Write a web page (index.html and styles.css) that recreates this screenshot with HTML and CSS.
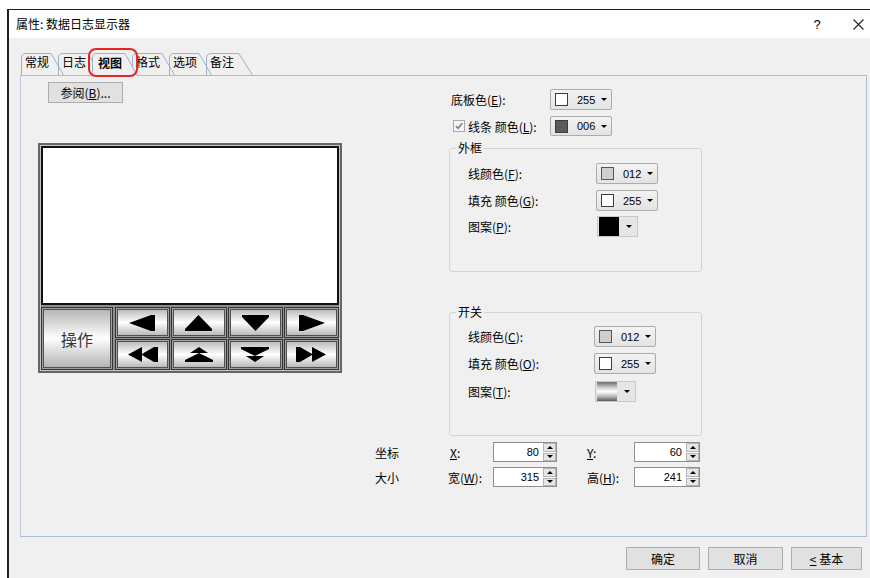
FILE: index.html
```html
<!DOCTYPE html>
<html lang="zh-CN">
<head>
<meta charset="utf-8">
<title>属性: 数据日志显示器</title>
<link rel="stylesheet" href="styles.css">
</head>
<body>
<div class="window">
  <div class="titlebar">
    <span class="title">属性: 数据日志显示器</span>
    <span class="help">?</span>
    <span class="close"><svg width="11" height="11" viewBox="0 0 11 11"><path d="M0.5 0.5 L10.5 10.5 M10.5 0.5 L0.5 10.5" stroke="#222" stroke-width="1.1" fill="none"/></svg></span>
  </div>
  <div class="body">
    <div class="tabs">
      <div class="tab"><svg class="tabshape" viewBox="0 0 43 22" preserveAspectRatio="none"><path d="M0.5 22 L0.5 5 Q0.5 0.5 5 0.5 L30 0.5 L42.5 22" /></svg><span>常规</span></div>
      <div class="tab"><svg class="tabshape" viewBox="0 0 43 22" preserveAspectRatio="none"><path d="M0.5 22 L0.5 5 Q0.5 0.5 5 0.5 L30 0.5 L42.5 22" /></svg><span>日志</span></div>
      <div class="tab active"><svg class="tabshape" viewBox="0 0 46 23" preserveAspectRatio="none"><path class="fill" d="M0.5 23 L0.5 5 Q0.5 0.5 5 0.5 L33 0.5 L45.5 23 Z" /><path d="M0.5 23 L0.5 5 Q0.5 0.5 5 0.5 L33 0.5 L45.5 23" /></svg><span>视图</span><i class="ring"></i></div>
      <div class="tab"><svg class="tabshape" viewBox="0 0 43 22" preserveAspectRatio="none"><path d="M0.5 22 L0.5 5 Q0.5 0.5 5 0.5 L30 0.5 L42.5 22" /></svg><span>格式</span></div>
      <div class="tab"><svg class="tabshape" viewBox="0 0 43 22" preserveAspectRatio="none"><path d="M0.5 22 L0.5 5 Q0.5 0.5 5 0.5 L30 0.5 L42.5 22" /></svg><span>选项</span></div>
      <div class="tab last"><svg class="tabshape" viewBox="0 0 43 22" preserveAspectRatio="none"><path d="M0.5 22 L0.5 5 Q0.5 0.5 5 0.5 L30 0.5 L42.5 22" /></svg><span>备注</span></div>
    </div>
    <div class="panel">
      <div class="left">
        <button class="browse">参阅(<u>B</u>)...</button>
        <div class="device">
          <div class="screen"></div>
          <div class="controls">
            <div class="key op">操作</div>
            <div class="keys">
              <div class="key"><svg width="27" height="16" viewBox="0 0 27 16"><polygon points="0,8 22,0 26,0 26,16 22,16"/></svg></div>
              <div class="key"><svg width="27" height="16" viewBox="0 0 27 16"><polygon points="0,14 13.5,0 27,14 27,16 0,16"/></svg></div>
              <div class="key"><svg width="27" height="16" viewBox="0 0 27 16"><polygon points="0,0 27,0 27,2 13.5,16 0,2"/></svg></div>
              <div class="key"><svg width="27" height="16" viewBox="0 0 27 16"><polygon points="27,8 5,0 1,0 1,16 5,16"/></svg></div>
              <div class="key"><svg width="30" height="15" viewBox="0 0 30 15"><polygon points="0,7.5 14,0 14,15"/><polygon points="13,7.5 26,0 30,0 30,15 26,15"/></svg></div>
              <div class="key"><svg width="28" height="15" viewBox="0 0 28 15"><polygon points="14,0 23,6 5,6"/><polygon points="14,6 28,13 28,15 0,15 0,13"/></svg></div>
              <div class="key"><svg width="28" height="15" viewBox="0 0 28 15"><polygon points="0,0 28,0 28,2 14,9 0,2"/><polygon points="5,9 23,9 14,15"/></svg></div>
              <div class="key"><svg width="30" height="15" viewBox="0 0 30 15"><polygon points="30,7.5 16,0 16,15"/><polygon points="17,7.5 4,0 0,0 0,15 4,15"/></svg></div>
            </div>
          </div>
        </div>
      </div>
      <div class="right">
        <div class="colors">
          <div class="row r1">
            <span class="lbl w99">底板色(<u>E</u>):</span>
            <div class="combo"><span class="sw white"></span><span class="num">255</span><span class="arr"></span></div>
          </div>
          <div class="row r2">
            <span class="chk"><svg width="12" height="12" viewBox="0 0 12 12"><rect x="0.5" y="0.5" width="11" height="11" fill="#f4f4f4" stroke="#a9a9a9"/><path d="M2.8 6 L5 8.3 L9.3 3.3" stroke="#6f7d99" stroke-width="1.5" fill="none"/></svg></span>
            <span class="lbl w82">线条 颜色(<u>L</u>):</span>
            <div class="combo"><span class="sw dark"></span><span class="num">006</span><span class="arr"></span></div>
          </div>
          <fieldset class="grp g1">
            <legend>外框</legend>
            <div class="grp-body">
              <div class="row">
                <span class="lbl w128">线颜色(<u>F</u>):</span>
                <div class="combo"><span class="sw grey"></span><span class="num">012</span><span class="arr"></span></div>
              </div>
              <div class="row gap6">
                <span class="lbl w128">填充 颜色(<u>G</u>):</span>
                <div class="combo"><span class="sw white"></span><span class="num">255</span><span class="arr"></span></div>
              </div>
              <div class="row gap5">
                <span class="lbl w129">图案(<u>P</u>):</span>
                <div class="pat"><span class="pat-sw black"></span><span class="arr"></span></div>
              </div>
            </div>
          </fieldset>
          <fieldset class="grp g2">
            <legend>开关</legend>
            <div class="grp-body">
              <div class="row">
                <span class="lbl w126">线颜色(<u>C</u>):</span>
                <div class="combo"><span class="sw grey"></span><span class="num">012</span><span class="arr"></span></div>
              </div>
              <div class="row gap6">
                <span class="lbl w126">填充 颜色(<u>O</u>):</span>
                <div class="combo"><span class="sw white"></span><span class="num">255</span><span class="arr"></span></div>
              </div>
              <div class="row gap7">
                <span class="lbl w127">图案(<u>T</u>):</span>
                <div class="pat"><span class="pat-sw grad"></span><span class="arr"></span></div>
              </div>
            </div>
          </fieldset>
        </div>
        <div class="geo">
          <div class="grow">
            <span class="glbl w75">坐标</span>
            <span class="glbl w43"><u>X</u>:</span>
            <div class="spin w64"><span class="val">80</span><span class="sp"><i class="up"></i><i class="dn"></i></span></div>
            <span class="glbl w47 ml30"><u>Y</u>:</span>
            <div class="spin w66"><span class="val">60</span><span class="sp"><i class="up"></i><i class="dn"></i></span></div>
          </div>
          <div class="grow g2row">
            <span class="glbl w73">大小</span>
            <span class="glbl w45">宽(<u>W</u>):</span>
            <div class="spin w64"><span class="val">315</span><span class="sp"><i class="up"></i><i class="dn"></i></span></div>
            <span class="glbl w47 ml30">高(<u>H</u>):</span>
            <div class="spin w66"><span class="val">241</span><span class="sp"><i class="up"></i><i class="dn"></i></span></div>
          </div>
        </div>
      </div>
    </div>
    <div class="actions">
      <button class="btn b1">确定</button>
      <button class="btn b2">取消</button>
      <button class="btn b3"><u>&lt;</u> 基本</button>
    </div>
  </div>
</div>
</body>
</html>
```

FILE: styles.css
```css
* { box-sizing: border-box; }
html, body {
  margin: 0;
  padding: 0;
  width: 870px;
  height: 578px;
  overflow: hidden;
  background: #fff;
  font-family: "Noto Sans CJK SC", "Noto Sans", sans-serif;
  font-size: 12px;
  color: #000;
}
u { text-decoration: underline; text-underline-offset: 1px; }

.window {
  margin: 9px 0 0 7px;
  width: 863px;
  height: 569px;
  border-top: 1px solid #1e1e1e;
  border-left: 2px solid #1e1e1e;
  display: flex;
  flex-direction: column;
}

.titlebar {
  height: 28px;
  flex: none;
  background: #fff;
  display: flex;
  align-items: center;
  padding-left: 7px;
}
.title { flex: 1; font-size: 12px; line-height: 16px; }
.help {
  width: 20px;
  text-align: center;
  margin-right: 21px;
  font-family: "Liberation Sans", sans-serif;
  font-size: 13px;
}
.close {
  width: 20px;
  margin-right: 2px;
  display: flex;
  justify-content: center;
  align-items: center;
}

.body {
  flex: 1;
  background: #f0f0f0;
  padding: 15px 0 0 11px;
  display: flex;
  flex-direction: column;
}

/* tabs */
.tabs {
  display: flex;
  align-items: flex-end;
  height: 22px;
  padding-left: 1px;
  position: relative;
  z-index: 2;
}
.tab {
  position: relative;
  width: 43px;
  height: 22px;
  margin-right: -6px;
  padding: 0 0 0 4px;
  line-height: 17px;
  font-size: 12px;
}
.tab span { position: relative; display: block; padding-top: 0; }
.tab.last { width: 47px; }
.tabshape {
  position: absolute;
  left: 0;
  top: 0;
  width: 100%;
  height: 100%;
  overflow: visible;
}
.tabshape path {
  fill: none;
  stroke: #9fb0cc;
  stroke-width: 1;
  vector-effect: non-scaling-stroke;
}
.tab.active {
  width: 46px;
  height: 23px;
  margin-left: -3px;
  margin-bottom: -1px;
  padding-left: 6px;
  font-weight: bold;
  z-index: 3;
}
.tab.active span { padding-top: 1px; }
.tabshape path.fill { fill: #f0f0f0; stroke: none; }
.ring {
  position: absolute;
  left: -4px;
  top: -5px;
  width: 50px;
  height: 29px;
  border: 2px solid #e3261f;
  border-radius: 8px;
}

/* panel */
.panel {
  width: 847px;
  height: 462px;
  border: 1px solid #aebcd8;
  border-left-color: #c3cde2;
  display: flex;
  flex: none;
}
.left {
  width: 354px;
  flex: none;
  padding: 6px 0 0 27px;
}
.browse {
  display: block;
  width: 75px;
  height: 21px;
  margin: 0;
  padding: 0;
  background: #e1e1e1;
  border: 1px solid #adadad;
  font-family: inherit;
  font-size: 12px;
  line-height: 17px;
  color: #000;
}

.device {
  margin: 40px 0 0 -10px;
  width: 304px;
  height: 230px;
  border: 2px solid #666;
  background: #c4c4c4;
  padding: 1px;
  display: flex;
  flex-direction: column;
}
.screen {
  height: 159px;
  flex: none;
  border: 2px solid #111;
  background: #fff;
}
.controls {
  flex: 1;
  display: flex;
  gap: 2px;
  padding-top: 2px;
  background: #8e8e8e;
}
.key {
  border: 1px solid #333;
  box-shadow: inset 0 0 0 1px #a0a0a0, inset 0 0 0 2px #505050;
  background: linear-gradient(#b2b2b2 0%, #e8e8e8 35%, #ffffff 50%, #e6e6e6 65%, #b0b0b0 100%);
  display: flex;
  align-items: center;
  justify-content: center;
}
.key svg { fill: #000; display: block; }
.op {
  width: 72px;
  flex: none;
  font-size: 16px;
  color: #333;
}
.keys {
  flex: 1;
  display: grid;
  grid-template-columns: repeat(4, 1fr);
  grid-template-rows: 1fr 1fr;
  gap: 1px;
}

/* right side */
.right { flex: 1; padding-top: 13px; }
.colors { margin-left: 75px; width: 253px; }
.row {
  display: flex;
  align-items: center;
  height: 21px;
}
.r1 { padding-left: 1px; }
.r2 { margin-top: 6px; height: 20px; }
.gap5 { margin-top: 5px; }
.gap6 { margin-top: 6px; }
.gap7 { margin-top: 7px; }
.lbl { flex: none; white-space: nowrap; font-size: 12px; }
.w99 { width: 99px; }
.w82 { width: 82px; }
.w126 { width: 126px; }
.w127 { width: 127px; }
.w128 { width: 128px; }
.w129 { width: 129px; }
.chk { width: 12px; height: 12px; margin: 0 3px 0 3px; display: flex; }

.combo {
  width: 62px;
  height: 21px;
  flex: none;
  border: 1px solid #acacac;
  border-radius: 2px;
  background: linear-gradient(#f3f3f3, #e3e3e3);
  display: flex;
  align-items: center;
  padding-left: 4px;
}
.r2 .combo { height: 20px; }
.sw {
  width: 13px;
  height: 13px;
  border: 1px solid #3c3c3c;
  flex: none;
}
.sw.white { background: #fff; }
.sw.dark { background: #5b5b5b; }
.sw.grey { background: #cfcfcf; border-color: #555; }
.num {
  margin-left: 9px;
  font-family: "Liberation Sans", sans-serif;
  font-size: 11px;
}
.arr {
  margin-left: auto;
  margin-right: 4px;
  width: 0;
  height: 0;
  border-left: 3px solid transparent;
  border-right: 3px solid transparent;
  border-top: 3px solid #000;
}
.pat {
  width: 41px;
  height: 21px;
  flex: none;
  border: 1px solid #c8c8c8;
  background: #e6e6e6;
  display: flex;
  align-items: center;
  padding-left: 1px;
}
.pat-sw { width: 20px; height: 19px; flex: none; }
.pat-sw.black { background: #000; }
.pat-sw.grad { background: linear-gradient(#6e6e6e 0%, #cfcfcf 30%, #ffffff 50%, #bdbdbd 75%, #5a5a5a 100%); }
.pat .arr { margin-right: 5px; }

.grp {
  margin: 4px 0 0 -1px;
  padding: 0;
  width: 253px;
  height: 132px;
  border: 1px solid #d5d5d5;
  border-radius: 3px;
  min-width: 0;
}
.grp legend {
  margin-left: 6px;
  padding: 0 2px;
  font-size: 12px;
  line-height: 16px;
}
.grp.g2 { margin-top: 32px; }
.grp-body { padding: 7px 0 0 18px; }
.g2 .grp-body { padding-top: 6px; }

/* geometry */
.geo { margin-top: 6px; }
.grow { display: flex; align-items: center; height: 20px; }
.g2row { margin-top: 5px; }
.glbl { flex: none; white-space: nowrap; font-size: 12px; }
.w75 { width: 75px; }
.w73 { width: 73px; }
.w43 { width: 43px; }
.w45 { width: 45px; }
.w47 { width: 47px; }
.ml30 { margin-left: 30px; }
.spin {
  flex: none;
  height: 20px;
  display: flex;
  border: 1px solid #8f8f8f;
  background: #fff;
}
.w64 { width: 64px; }
.w66 { width: 66px; }
.val {
  flex: 1;
  text-align: right;
  padding-right: 4px;
  font-family: "Liberation Sans", sans-serif;
  font-size: 11px;
  line-height: 18px;
}
.sp {
  width: 13px;
  flex: none;
  display: flex;
  flex-direction: column;
  gap: 1px;
  background: #fff;
}
.sp i {
  flex: 1;
  background: #e6e6e6;
  border: 1px solid #b5b5b5;
  display: flex;
  align-items: center;
  justify-content: center;
}
.sp i::after {
  content: "";
  width: 0;
  height: 0;
  border-left: 3px solid transparent;
  border-right: 3px solid transparent;
}
.sp i.up::after { border-bottom: 3px solid #000; }
.sp i.dn::after { border-top: 3px solid #000; }

/* bottom buttons */
.actions {
  display: flex;
  justify-content: flex-end;
  gap: 8px;
  margin-top: 10px;
  padding-right: 8px;
}
.btn {
  height: 23px;
  margin: 0;
  padding: 0;
  background: #e1e1e1;
  border: 1px solid #adadad;
  font-family: inherit;
  font-size: 12px;
  color: #000;
}
.b1 { width: 74px; }
.b2 { width: 75px; }
.b3 { width: 71px; }
```
